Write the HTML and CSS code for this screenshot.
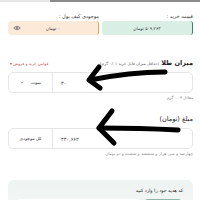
FILE: index.html
```html
<!DOCTYPE html>
<html lang="fa" dir="rtl">
<head>
<meta charset="utf-8">
<link rel="stylesheet" href="styles.css">
</head>
<body>
<div class="tabs"><span class="tab active"></span><span class="tab"></span></div>
<div class="page">
  <div class="summary">
    <div class="col">
      <div class="lbl">قیمت خرید :</div>
      <div class="box green"><span>۵۰۹,۲۶۳ تومان</span></div>
    </div>
    <div class="col">
      <div class="lbl">موجودی کیف پول :</div>
      <div class="box peach"><span>۰ تومان</span>
        <svg class="eye" viewBox="0 0 12 8" width="8" height="6"><path d="M1 4 Q6 -1 11 4 Q6 9 1 4Z" fill="none" stroke="#555" stroke-width="1"/><circle cx="6" cy="4" r="1.5" fill="none" stroke="#555" stroke-width="1"/></svg>
      </div>
    </div>
  </div>

  <div class="head">
    <span class="title">میزان طلا</span>
    <span class="hint">(حداقل میزان قابل خرید ۰/۰۱ گرم)</span>
    <span class="rules">قوانین خرید و فروش ▾</span>
  </div>
  <div class="field">
    <div class="value">۳۰</div>
    <div class="side">سوت
      <svg class="chev" viewBox="0 0 6 4" width="4" height="3"><path d="M1 1 L3 3 L5 1" fill="none" stroke="#666" stroke-width="0.9"/></svg>
    </div>
  </div>
  <div class="note">معادل ۰.۰۳ گرم</div>

  <div class="head head2">
    <span class="title">مبلغ (تومان)</span>
  </div>
  <div class="field">
    <div class="value">۴۳۰,۶۶۲</div>
    <div class="side">کل موجودی</div>
  </div>
  <div class="note words">چهارصد و سی هزار و ششصد و شصت و دو تومان</div>

  <div class="card">
    <div class="card-title">کد هدیه خود را وارد کنید</div>
    <div class="card-row">
      <div class="gift-input"></div>
      <div class="gift-btn"></div>
    </div>
  </div>
</div>
<svg class="arrows" viewBox="0 0 200 200" width="200" height="200">
  <path d="M165 72 Q130 72 90 80" fill="none" stroke="#000" stroke-width="5" stroke-linecap="round"/>
  <path d="M99 67 L89 80 L100 88" fill="none" stroke="#000" stroke-width="5" stroke-linecap="round" stroke-linejoin="round"/>
  <path d="M178 130 Q140 128 99 128" fill="none" stroke="#000" stroke-width="5" stroke-linecap="round"/>
  <path d="M112 111 L99 128 L114 143" fill="none" stroke="#000" stroke-width="5" stroke-linecap="round" stroke-linejoin="round"/>
</svg>
</body>
</html>
```

FILE: styles.css
```css
html, body { margin: 0; padding: 0; overflow: hidden; }
body {
  width: 200px; height: 200px; position: relative;
  background: #fff; color: #333;
  font-family: "DejaVu Sans", "Noto Sans", sans-serif;
}
.tabs { display: flex; height: 2px; }
.tab { flex: 1; background: #e6e6e6; }
.tab.active { flex: 3; background: #8a8a8a; }
.page { padding: 0 7px 0 8px; }
.summary { display: flex; gap: 3px; margin-top: 10px; }
.col { flex: 1; display: flex; flex-direction: column; }
.lbl { font-size: 5px; height: 9px; line-height: 9px; color: #333; }
.box {
  height: 14px; border-radius: 3px; display: flex; align-items: center; justify-content: center;
  font-size: 4.4px; position: relative; box-sizing: border-box;
}
.green { background: #d9efe6; border-right: 1.5px solid #3d7f62; }
.peach { background: #fde9d8; border-right: 1.5px solid #e0a35a; }
.eye { position: absolute; left: 5px; top: 4px; }
.head { display: flex; align-items: baseline; gap: 2px; margin-top: 24px; height: 8px; }
.title { font-size: 6.5px; font-weight: bold; color: #222; }
.hint { font-size: 4px; color: #555; }
.rules { margin-right: auto; font-size: 4px; color: #c44a4a; margin-left: 2px; }
.field {
  display: flex; height: 21px; margin-top: 5px; border: 1px solid #e5e5e5; border-radius: 5px;
  box-sizing: border-box;
}
.value { flex: 1; display: flex; align-items: center; justify-content: flex-end; padding-left: 8px; font-size: 5px; color: #333; }
.side { width: 43px; border-right: 1px solid #e5e5e5; display: flex; align-items: center; justify-content: center; gap: 7px; font-size: 4.4px; color: #333; }
.note { font-size: 3.9px; color: #777; margin-top: 2px; height: 6px; }
.head2 { margin-top: 14px; }
.head2 .title { font-weight: normal; font-size: 6.5px; }
.words { font-size: 4.2px; color: #888; }
.card {
  margin-top: 23px; height: 28px; border-radius: 6px 6px 0 0; box-sizing: border-box;
  background: linear-gradient(#eef4f2, #f3f6f5);
  padding: 7px 10px 0 9px;
}
.card-title { font-size: 4.7px; color: #222; height: 8px; line-height: 8px; }
.card-row { display: flex; flex-direction: row-reverse; gap: 3px; margin-top: 4px; }
.gift-btn { width: 40px; height: 9px; border-radius: 5px 5px 0 0; background: linear-gradient(#8fb5aa, #b4cfc7); }
.gift-input { flex: 1; height: 9px; background: #fff; border-radius: 3px 3px 0 0; }
.arrows { position: absolute; left: 0; top: 0; pointer-events: none; }
```
